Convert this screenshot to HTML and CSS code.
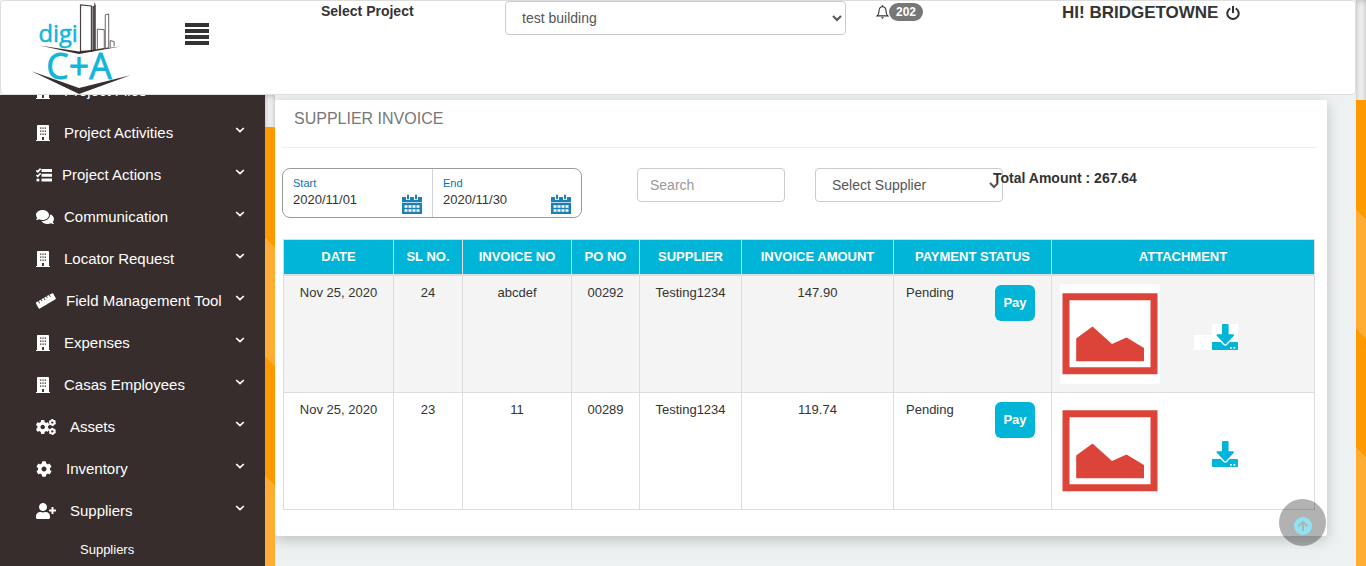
FILE: index.html
```html
<!DOCTYPE html>
<html lang="en">
<head>
<meta charset="utf-8">
<meta name="viewport" content="width=device-width, initial-scale=1">
<title>Supplier Invoice</title>
<link rel="stylesheet" href="styles.css">
</head>
<body>
<svg class="sprite" aria-hidden="true">
  <symbol id="building" viewBox="0 0 448 512"><path fill-rule="evenodd" d="M436 480h-20V24c0-13-11-24-24-24H56C43 0 32 11 32 24v456H12c-7 0-12 5-12 12v20h448v-20c0-7-5-12-12-12zM130 80h42v42h-42zM204 80h42v42h-42zM278 80h42v42h-42zM130 176h42v42h-42zM204 176h42v42h-42zM278 176h42v42h-42zM130 272h42v42h-42zM204 272h42v42h-42zM278 272h42v42h-42zM194 384h60v96h-60z"/></symbol>
  <symbol id="tasks" viewBox="0 0 16 16"><path d="M5.500 2h10.500v3h-10.500zM5.500 6.800h10.500v3h-10.500zM5.500 11.500h10.500v3h-10.500z"/><circle cx="1.900" cy="13" r="1.600"/><path d="M.4 3.400l1.400 1.400L4.600 1.600M.4 8l1.400 1.400L4.600 6.200" fill="none" stroke="currentColor" stroke-width="1.600"/></symbol>
  <symbol id="comments" viewBox="0 0 576 512"><path d="M416 192c0-88.400-93.100-160-208-160S0 103.600 0 192c0 34.300 14.100 65.900 38 92-13.400 30.200-35.500 54.200-35.800 54.500-2.200 2.300-2.800 5.700-1.500 8.700S4.800 352 8 352c36.600 0 66.900-12.300 88.700-25 32.200 15.700 70.300 25 111.300 25 114.900 0 208-71.600 208-160zm122 220c23.900-26 38-57.700 38-92 0-66.900-53.500-124.200-129.300-148.100.9 6.600 1.300 13.300 1.300 20.100 0 105.900-107.700 192-240 192-10.800 0-21.300-.8-31.700-1.900C207.800 439.600 281.800 480 368 480c41 0 79.100-9.200 111.300-25 21.800 12.700 52.100 25 88.700 25 3.200 0 6.100-1.900 7.300-4.800 1.300-2.900.7-6.300-1.500-8.700-.3-.3-22.400-24.200-35.800-54.500z"/></symbol>
  <symbol id="ruler" viewBox="0 0 20 16"><path d="M.3 9.300L2 8.300l1.400 2.200.7-.4-1.400-2.200 2-1.200.9 1.500.7-.4-.9-1.500 2-1.200 1.400 2.200.7-.4-1.400-2.200 2-1.200.9 1.500.7-.4-.9-1.500 2-1.200 1.400 2.200.7-.4-1.400-2.200L16 .5c.5-.3 1-.1 1.300.3l2.400 4.200c.3.500.1 1-.3 1.300L3.900 15.500c-.5.300-1 .1-1.300-.3L0 10.600c-.3-.5-.1-1 .3-1.300z"/></symbol>
  <symbol id="cog" viewBox="0 0 512 512"><path d="M487.400 315.700l-42.600-24.600c4.300-23.200 4.300-47 0-70.200l42.600-24.600c4.900-2.800 7.100-8.600 5.500-14-11.100-35.600-30-67.800-54.700-94.600-3.800-4.100-10-5.100-14.800-2.300L380.800 110c-17.900-15.400-38.500-27.300-60.800-35.100V25.800c0-5.600-3.900-10.500-9.400-11.700-36.700-8.200-74.300-7.800-109.200 0-5.500 1.200-9.400 6.100-9.400 11.700V75c-22.200 7.900-42.800 19.800-60.800 35.100L88.700 85.500c-4.900-2.800-11-1.900-14.800 2.300-24.700 26.700-43.600 58.900-54.700 94.600-1.700 5.400.6 11.200 5.500 14L67.300 221c-4.300 23.200-4.300 47 0 70.200l-42.600 24.600c-4.900 2.800-7.100 8.600-5.500 14 11.100 35.600 30 67.800 54.700 94.600 3.800 4.100 10 5.100 14.800 2.300l42.600-24.600c17.900 15.400 38.500 27.300 60.800 35.100v49.200c0 5.600 3.900 10.500 9.400 11.700 36.700 8.200 74.300 7.800 109.200 0 5.500-1.200 9.400-6.100 9.400-11.700v-49.200c22.200-7.900 42.800-19.800 60.800-35.100l42.600 24.600c4.900 2.800 11 1.900 14.800-2.300 24.700-26.700 43.600-58.900 54.700-94.600 1.500-5.500-.7-11.300-5.600-14.100zM256 336c-44.100 0-80-35.900-80-80s35.900-80 80-80 80 35.900 80 80-35.900 80-80 80z"/></symbol>
  <symbol id="cogs" viewBox="0 0 20 16"><use href="#cog" x="-.5" y=".8" width="14.400" height="14.400"/><g fill="none" stroke="currentColor" stroke-width="1.900"><circle cx="16.300" cy="3.600" r="2.100"/><circle cx="16.300" cy="12.400" r="2.100"/></g><g fill="none" stroke="currentColor" stroke-width="1.200" stroke-dasharray="1.700 1.500"><circle cx="16.300" cy="3.600" r="3"/><circle cx="16.300" cy="12.400" r="3"/></g></symbol>
  <symbol id="user-plus" viewBox="0 0 640 512"><path d="M624 208h-64v-64c0-8.800-7.200-16-16-16h-32c-8.800 0-16 7.200-16 16v64h-64c-8.800 0-16 7.200-16 16v32c0 8.800 7.200 16 16 16h64v64c0 8.800 7.200 16 16 16h32c8.800 0 16-7.200 16-16v-64h64c8.800 0 16-7.200 16-16v-32c0-8.800-7.200-16-16-16zm-400 48c70.700 0 128-57.300 128-128S294.700 0 224 0 96 57.300 96 128s57.300 128 128 128zm89.600 32h-16.700c-22.200 10.200-46.900 16-72.900 16s-50.600-5.800-72.900-16h-16.700C60.200 288 0 348.200 0 422.400V464c0 26.500 21.500 48 48 48h352c26.500 0 48-21.500 48-48v-41.600c0-74.200-60.200-134.400-134.400-134.400z"/></symbol>
  <symbol id="angle" viewBox="0 0 10 6"><path d="M1.200 1L5 4.600 8.800 1" fill="none" stroke="currentColor" stroke-width="1.700"/></symbol>
  <symbol id="calendar" viewBox="0 0 20 20"><path fill="#1b7fb8" d="M0 3h20v17H0z"/><path stroke="#fff" stroke-width="1" d="M0 8.500h20" opacity=".7"/><path fill="none" stroke="#fff" stroke-width="4" d="M6 2v4M14 2v4"/><path stroke="#1b7fb8" stroke-width="2" stroke-linecap="round" d="M6 1.500v3M14 1.500v3"/><path stroke="#fff" stroke-width="2.600" stroke-dasharray="3 1" d="M2.500 12.500h15M2.500 16.500h15"/></symbol>
  <symbol id="picture" viewBox="0 0 100 100"><path fill="#fff" d="M0 0h100v100H0z"/><path fill="none" stroke="#dd4439" stroke-width="7" d="M6 12.700h88v74.100H6z"/><path fill="#dd4439" d="M16.200 54.500L32.500 42.500 52 60l14.500-6.500L84 64v13.300H16.200z"/></symbol>
  <symbol id="download" viewBox="0 0 26 26"><path d="M11.200 0h4.200c.7 0 1.200.5 1.200 1.200v9h4.500c.9 0 1.300 1 .7 1.600l-7.700 8.300c-.4.400-1.100.4-1.500 0L4.800 11.800c-.6-.6-.2-1.600.7-1.600H10v-9c0-.7.500-1.200 1.200-1.200z"/><path fill-rule="evenodd" d="M1 18h7.800l2.700 2.900c1 1 2.500 1 3.500 0l2.700-2.900H25c.6 0 1 .4 1 1v6c0 .6-.4 1-1 1H1c-.6 0-1-.4-1-1v-6c0-.6.4-1 1-1zm17 5v1.800h1.800V23zm3.500 0v1.800h1.800V23z"/></symbol>
</svg>

<div class="page">
  <div class="page__body">
    <header class="topbar">
      <a class="logo" href="#" aria-label="digi C+A">
        <svg class="logo__art" viewBox="0 0 102 94">
          <g fill="#fff" stroke="#6a6464" stroke-width="1">
            <path d="M49.500 51V4l11 1v46z" stroke="#4a4242" stroke-width="1.200"/>
            <path d="M66.500 49V28.500l7 .5v19z"/>
            <path d="M74.500 48V14l3.500-1v34z"/>
            <path d="M79.500 47v-7l4 1v5"/>
          </g>
          <path fill="#544c4c" d="M61.500 51V5h1.500l1-4 1 4v45z"/>
          <path fill="#362d2c" d="M8 45l40 6 42-5-42 7.500zM0 71l48 17 52-13-52 19z"/>
          <text class="logo__small" x="7" y="41">digi</text>
          <text class="logo__big" x="15" y="79">C+A</text>
        </svg>
      </a>
      <button class="menu" type="button" aria-label="Toggle menu"><svg viewBox="0 0 24 22"><path stroke="#333" stroke-width="4" d="M0 2h24M0 8h24M0 14h24M0 20h24"/></svg></button>
      <label class="topbar__label" for="project">Select Project</label>
      <select class="field topbar__select" id="project"><option>test building</option></select>
      <a class="alerts" href="#" aria-label="Notifications">
        <svg class="alerts__bell" viewBox="0 0 13 14"><path d="M6.500 1.800C4 1.800 3 3.700 3 6c0 2.600-.6 3.700-1.900 4.900h10.800C10.600 9.700 10 8.600 10 6c0-2.300-1-4.200-3.500-4.200z" fill="none" stroke="#333" stroke-width="1.100"/><path d="M6.500.2v1.600" stroke="#333" stroke-width="1.400"/><path d="M5 12.300h3L6.500 14z" fill="#333"/></svg>
        <span class="alerts__count">202</span>
      </a>
      <div class="user">
        <span>HI! BRIDGETOWNE</span>
        <button class="user__power" type="button" aria-label="Log out"><svg viewBox="0 0 14 14"><path d="M4.300 2.300a5.700 5.700 0 1 0 5.400 0M7 0v7" fill="none" stroke="#333" stroke-width="2"/></svg></button>
      </div>
    </header>

    <div class="workspace">
      <nav class="sidebar" aria-label="Main">
        <ul class="nav">
          <li><a class="nav__item" href="#"><svg class="icon icon--s"><use href="#building"/></svg>Project Files<svg class="angle"><use href="#angle"/></svg></a></li>
          <li><a class="nav__item" href="#"><svg class="icon icon--s"><use href="#building"/></svg>Project Activities<svg class="angle"><use href="#angle"/></svg></a></li>
          <li><a class="nav__item nav__item--tight" href="#"><svg class="icon icon--m"><use href="#tasks"/></svg>Project Actions<svg class="angle"><use href="#angle"/></svg></a></li>
          <li><a class="nav__item nav__item--tight" href="#"><svg class="icon icon--l"><use href="#comments"/></svg>Communication<svg class="angle"><use href="#angle"/></svg></a></li>
          <li><a class="nav__item" href="#"><svg class="icon icon--s"><use href="#building"/></svg>Locator Request<svg class="angle"><use href="#angle"/></svg></a></li>
          <li><a class="nav__item nav__item--tight" href="#"><svg class="icon icon--xl"><use href="#ruler"/></svg>Field Management Tool<svg class="angle"><use href="#angle"/></svg></a></li>
          <li><a class="nav__item" href="#"><svg class="icon icon--s"><use href="#building"/></svg>Expenses<svg class="angle"><use href="#angle"/></svg></a></li>
          <li><a class="nav__item" href="#"><svg class="icon icon--s"><use href="#building"/></svg>Casas Employees<svg class="angle"><use href="#angle"/></svg></a></li>
          <li><a class="nav__item" href="#"><svg class="icon icon--xl"><use href="#cogs"/></svg>Assets<svg class="angle"><use href="#angle"/></svg></a></li>
          <li><a class="nav__item" href="#"><svg class="icon icon--m"><use href="#cog"/></svg>Inventory<svg class="angle"><use href="#angle"/></svg></a></li>
          <li><a class="nav__item" href="#"><svg class="icon icon--xl"><use href="#user-plus"/></svg>Suppliers<svg class="angle"><use href="#angle"/></svg></a>
            <ul class="subnav"><li><a class="subnav__item" href="#">Suppliers</a></li></ul>
          </li>
        </ul>
      </nav>
      <div class="track track--side"><div class="track__thumb track__thumb--side"></div></div>

      <main class="content">
        <section class="card">
          <h1 class="card__title">Supplier Invoice</h1>
          <form class="filters">
            <div class="range">
              <div class="range__part">
                <label class="range__label" for="start">Start</label>
                <input class="range__input" id="start" type="text" value="2020/11/01">
                <button class="range__btn" type="button" aria-label="Pick start date"><svg><use href="#calendar"/></svg></button>
              </div>
              <div class="range__part">
                <label class="range__label" for="end">End</label>
                <input class="range__input" id="end" type="text" value="2020/11/30">
                <button class="range__btn" type="button" aria-label="Pick end date"><svg><use href="#calendar"/></svg></button>
              </div>
            </div>
            <input class="field filters__search" type="text" placeholder="Search" aria-label="Search">
            <select class="field filters__supplier" aria-label="Supplier"><option>Select Supplier</option></select>
            <strong class="filters__total">Total Amount : 267.64</strong>
          </form>

          <table class="table">
            <colgroup><col class="col-date"><col class="col-sl"><col class="col-inv"><col class="col-po"><col class="col-sup"><col class="col-amt"><col class="col-pay"><col></colgroup>
            <thead>
              <tr><th>DATE</th><th>SL NO.</th><th>INVOICE NO</th><th>PO NO</th><th>SUPPLIER</th><th>INVOICE AMOUNT</th><th>PAYMENT STATUS</th><th>ATTACHMENT</th></tr>
            </thead>
            <tbody>
              <tr>
                <td>Nov 25, 2020</td><td>24</td><td>abcdef</td><td>00292</td><td>Testing1234</td><td>147.90</td>
                <td><div class="payment"><span>Pending</span><button class="pay" type="button">Pay</button></div></td>
                <td><div class="files"><svg class="files__pic"><use href="#picture"/></svg><a class="files__get" href="#" aria-label="Download"><svg class="files__icon"><use href="#download"/></svg></a></div></td>
              </tr>
              <tr>
                <td>Nov 25, 2020</td><td>23</td><td>11</td><td>00289</td><td>Testing1234</td><td>119.74</td>
                <td><div class="payment"><span>Pending</span><button class="pay" type="button">Pay</button></div></td>
                <td><div class="files"><svg class="files__pic"><use href="#picture"/></svg><a class="files__get" href="#" aria-label="Download"><svg class="files__icon"><use href="#download"/></svg></a></div></td>
              </tr>
            </tbody>
          </table>
        </section>
      </main>
    </div>
  </div>
  <div class="track track--page"><div class="track__thumb track__thumb--page"></div></div>
</div>

<a class="to-top" href="#" aria-label="Back to top"><svg viewBox="0 0 18 18"><circle cx="9" cy="9" r="9" fill="#8fe3f2"/><path d="M9 14V5M4.500 9.200L9 4.800l4.500 4.400" fill="none" stroke="#aeb4b4" stroke-width="2"/></svg></a>
</body>
</html>
```

FILE: styles.css
```css
* { box-sizing: border-box; }

body {
  margin: 0;
  font-family: "Liberation Sans", Arial, sans-serif;
  font-size: 14px;
  line-height: 20px;
  color: #333;
  background: #edf1f2;
}

ul { list-style: none; margin: 0; padding: 0; }
a { color: inherit; text-decoration: none; }
button { border: 0; padding: 0; background: none; font: inherit; cursor: pointer; }
svg { display: block; }
.sprite { position: absolute; width: 0; height: 0; }

.page { display: flex; height: 100vh; overflow: hidden; }
.page__body { flex: 1; min-width: 0; display: flex; flex-direction: column; }

/* Scroll tracks */
.track {
  flex: none;
  width: 10px;
  display: flex;
  background: #f5f5f5;
  box-shadow: inset 0 0 6px rgba(0, 0, 0, .3);
}
.track__thumb { flex: 1; }
.track--side { padding-top: 32px; }
.track--page { padding-top: 100px; }
.track__thumb--side {
  background: repeating-linear-gradient(45deg, #ffad33 0 64px, #f90 64px 148px, #ffad33 148px 168px);
}
.track__thumb--page {
  background: repeating-linear-gradient(45deg, #ffad33 0 84px, #f90 84px 168px);
}

/* Top bar */
.topbar {
  flex: none;
  display: grid;
  grid-template-columns: 184px 136px 184px 371fr 186fr 293fr;
  align-items: start;
  min-height: 95px;
  background: #fff;
  border: 1px solid #ddd;
  border-radius: 4px;
}
.logo { padding-left: 30px; }
.logo__art { width: 102px; height: 93px; }
.logo__small, .logo__big {
  font-family: "Open Sans", "Noto Sans", sans-serif;
  fill: #12b5da;
  stroke: #12b5da;
}
.logo__small { font-size: 24px; stroke-width: .5px; }
.logo__big { font-size: 36px; stroke-width: .8px; }
.menu { width: 24px; margin-top: 22px; }
.topbar__label { font-weight: bold; }
.topbar__select { margin-right: 30px; }
.field {
  height: 34px;
  padding: 6px 12px;
  font: inherit;
  color: #555;
  background: #fff;
  border: 1px solid #ccc;
  border-radius: 4px;
}
.field::placeholder { color: #999; }
.alerts { display: flex; align-items: center; padding-top: 2px; }
.alerts__bell { width: 13px; height: 14px; }
.alerts__count {
  padding: 0 7px;
  line-height: 18px;
  font-size: 12px;
  font-weight: bold;
  color: #fff;
  background: #777;
  border-radius: 9px;
}
.user { display: flex; align-items: center; gap: 8px; padding-top: 2px; font-size: 17px; font-weight: bold; }
.user__power { width: 14px; height: 14px; }

/* Sidebar */
.workspace { flex: 1; min-height: 0; display: flex; }
.sidebar { flex: none; width: 265px; overflow: hidden; background: #362d2c; color: #fff; }
.nav { margin-top: -25px; }
.nav__item {
  display: flex;
  align-items: center;
  gap: 14px;
  height: 42px;
  padding: 0 20px 0 36px;
  font-size: 15px;
  white-space: nowrap;
}
.nav__item--tight { gap: 10px; }
.icon { flex: none; height: 16px; fill: currentColor; }
.icon--s { width: 14px; }
.icon--m { width: 16px; }
.icon--l { width: 18px; }
.icon--xl { width: 20px; }
.angle { flex: none; width: 10px; height: 6px; margin: 0 0 6px auto; }
.subnav__item { display: block; padding: 8px 0 8px 80px; font-size: 13px; }

/* Content */
.content { flex: 1; min-width: 0; padding: 5px 29px 0 0; overflow: hidden; }
.card {
  padding: 0 10px 26px 7px;
  background: #fff;
  border-radius: 2px;
  box-shadow: 0 4px 14px rgba(0, 0, 0, .2);
}
.card__title {
  margin: 0 0 20px;
  padding: 9px 12px 18px;
  border-bottom: 1px solid #eee;
  font-size: 16px;
  font-weight: normal;
  text-transform: uppercase;
  color: #777;
}
.filters { display: flex; align-items: flex-start; }
.range {
  flex: none;
  display: grid;
  grid-template-columns: 1fr 1fr;
  width: 300px;
  border: 1px solid #999da0;
  border-radius: 8px;
}
.range__part {
  display: grid;
  grid-template-columns: 1fr 20px;
  grid-template-rows: 16px 18px;
  padding: 6px 10px 8px;
}
.range__part + .range__part { border-left: 1px solid #ced4d8; }
.range__label { font-size: 11px; line-height: 16px; color: #0275b8; }
.range__input {
  grid-row: 2;
  width: 100%;
  height: 18px;
  padding: 0;
  border: 0;
  font: inherit;
  font-size: 13px;
  color: #333;
  background: none;
}
.range__btn { grid-column: 2; grid-row: 1 / 3; align-self: end; height: 20px; margin-bottom: -5px; }
.range__btn svg { width: 20px; height: 20px; }
.filters__search { width: 148px; margin-left: 55px; }
.filters__supplier { width: 188px; margin-left: 30px; }
.filters__total { z-index: 1; margin-left: -10px; }

.table {
  width: calc(100% - 3px);
  margin: 21px 2px 0 1px;
  table-layout: fixed;
  border-collapse: collapse;
  font-size: 13px;
  line-height: 18px;
  text-align: center;
  color: #333;
}
.col-date { width: 110px; }
.col-sl { width: 69px; }
.col-inv { width: 109px; }
.col-po { width: 68px; }
.col-sup { width: 102px; }
.col-amt { width: 152px; }
.col-pay { width: 158px; }
.table th, .table td { padding: 8px; border: 1px solid #ddd; vertical-align: top; }
.table th { color: #fff; background: #01b5d9; border-bottom-width: 2px; white-space: nowrap; }
.table tbody tr:nth-child(odd) { background: #f4f4f4; }
.payment { display: flex; justify-content: space-between; align-items: flex-start; padding: 0 8px 0 4px; }
.pay {
  width: 40px;
  margin-top: 1px;
  padding: 9px 0;
  font-weight: bold;
  color: #fff;
  background: #01b5d9;
  border-radius: 6px;
}
.files { display: flex; align-items: center; gap: 34px; }
.files__pic { width: 100px; height: 100px; }
.files__get { display: flex; align-items: flex-end; margin-top: 6px; }
.files__get::before { content: ""; width: 18px; height: 15px; background: #fff; }
.files__icon { width: 26px; height: 26px; fill: #01b5d9; background: #fff; }

.to-top {
  position: fixed;
  right: 40px;
  bottom: 20px;
  width: 47px;
  height: 47px;
  padding: 18px 14px 11px 15px;
  border-radius: 50%;
  background: rgba(0, 0, 0, .3);
}
```
